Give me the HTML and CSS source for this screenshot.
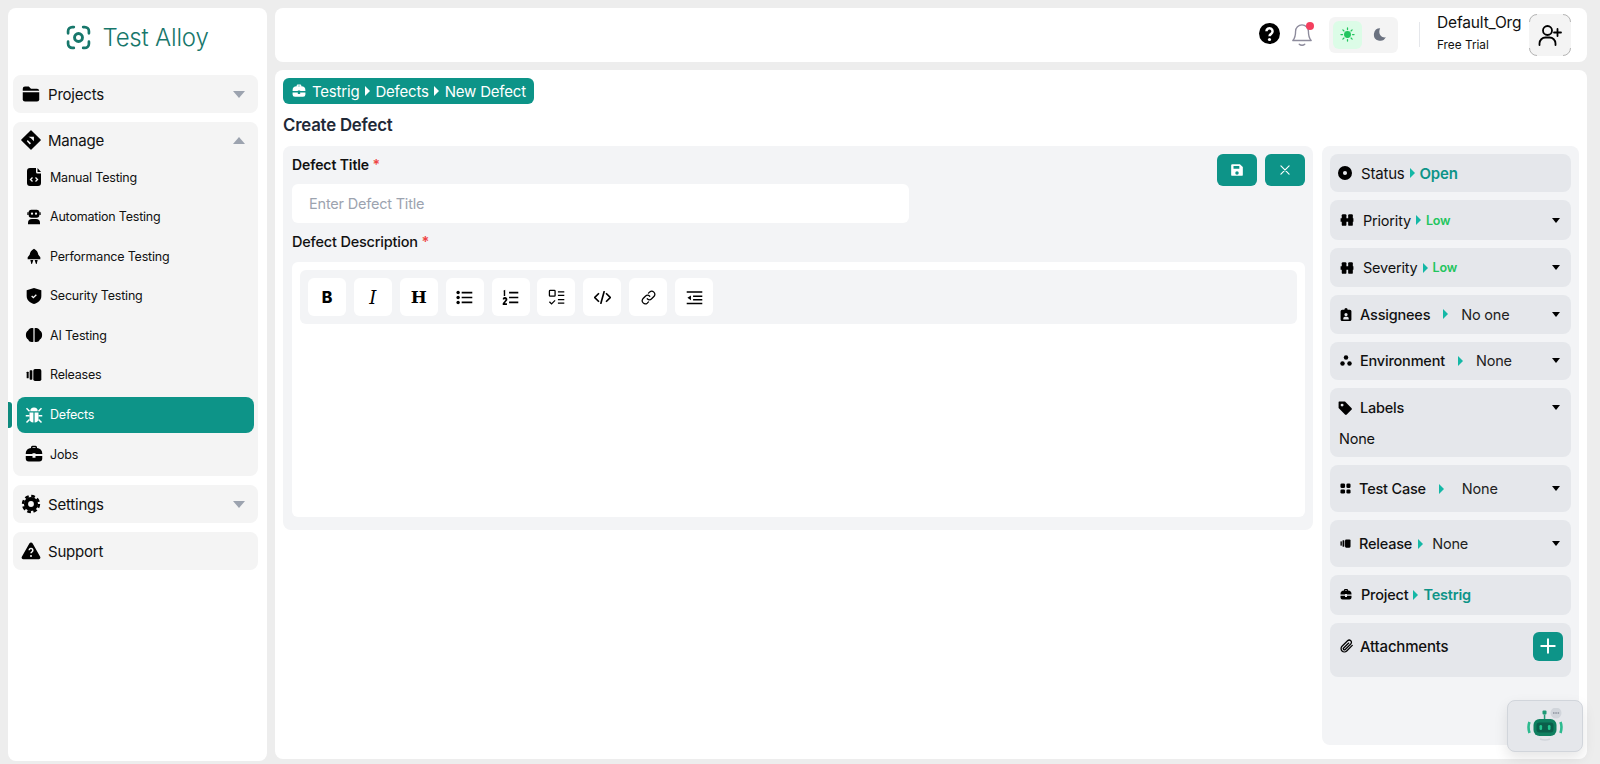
FILE: index.html
```html
<!DOCTYPE html>
<html lang="en">
<head>
  <meta charset="UTF-8">
  <meta name="viewport" content="width=device-width, initial-scale=1.0">
  <title>Create Defect</title>
  <link rel="stylesheet" href="styles.css">
</head>
<body>

  <!-- shared icons -->
  <svg class="sprites" width="0" height="0">
    <symbol id="i-case" viewBox="0 0 24 24"><path fill-rule="evenodd" d="M1 11a7 7 0 0 1 7-7V3a2 2 0 0 1 2-2h4a2 2 0 0 1 2 2v1a7 7 0 0 1 7 7v1H14v-1h-4v1H1zm9-8v1h4V3z"/><path d="M1 14.500h9V17h4v-2.500h9V18a4 4 0 0 1-4 4H5a4 4 0 0 1-4-4z"/></symbol>
    <symbol id="i-release" viewBox="0 0 24 24"><rect x="1" y="7" width="3" height="10" rx="1"/><rect x="5.500" y="5" width="4" height="14" rx="1"/><rect x="11" y="3" width="12" height="18" rx="2.500"/></symbol>
    <symbol id="i-bars" viewBox="0 0 24 24"><rect x="1" y="9" width="22" height="6"/><rect x="3" y="2" width="8" height="20" rx="2"/><rect x="14" y="2" width="8" height="20" rx="2"/></symbol>
  </svg>

  <aside class="sidebar">
    <div class="brand">
      <svg class="brand-icon" viewBox="0 0 24 24" fill="none" stroke="#17776b" stroke-width="2.600" stroke-linecap="round">
        <path d="M2 8V6a4 4 0 0 1 4-4h1.500M16.500 2H18a4 4 0 0 1 4 4v2M22 16v2a4 4 0 0 1-4 4h-1.500M7.500 22H6a4 4 0 0 1-4-4v-2"/>
        <circle cx="12" cy="12" r="3.800" stroke-width="2.800"/>
      </svg>
      <span>Test Alloy</span>
    </div>

    <div class="nav-group">
      <div class="nav-head">
        <svg class="nav-icon" viewBox="0 0 24 24"><path d="M1 5a3 3 0 0 1 3-3h5l3 3h8a3 3 0 0 1 3 2.500H1z"/><path d="M1 9.500h22V19a3 3 0 0 1-3 3H4a3 3 0 0 1-3-3z"/></svg>
        <span>Projects</span>
        <i class="chev"></i>
      </div>
    </div>

    <div class="nav-group">
      <div class="nav-head nav-head-open">
        <svg class="nav-icon icon-lg" viewBox="0 0 24 24"><path d="M12 1l11 11-11 11L1 12z" stroke="#000" stroke-width="1.500" stroke-linejoin="round"/><path d="M9 8h6.500v5.500L12 10z" fill="#f4f4f4"/><path d="M8 12l4 4-1.500 1.500L7 13.500z" fill="#f4f4f4"/></svg>
        <span>Manage</span>
        <i class="chev up"></i>
      </div>
      <ul class="sub-nav">
        <li>
          <svg class="icon-tall" viewBox="0 0 14 18"><path d="M3 0h6v4a1.500 1.500 0 0 0 1.500 1.500H14V15a3 3 0 0 1-3 3H3a3 3 0 0 1-3-3V3a3 3 0 0 1 3-3z"/><path d="M10.500 0L14 4h-3.500z"/><path d="M5.500 9.500L3.500 11.500l2 2M8.500 9.500l2 2-2 2" fill="none" stroke="#f4f4f4" stroke-width="1.300"/></svg>
          Manual Testing
        </li>
        <li>
          <svg viewBox="0 0 24 24"><rect x="4" y="1" width="16" height="12" rx="4"/><path d="M2 5h2v4H2zM20 5h2v4h-2z"/><circle cx="9" cy="7" r="1.700" fill="#f4f4f4"/><circle cx="15" cy="7" r="1.700" fill="#f4f4f4"/><path d="M3 23v-2a6 6 0 0 1 6-6h6a6 6 0 0 1 6 6v2z"/></svg>
          Automation Testing
        </li>
        <li>
          <svg viewBox="0 0 24 24"><path d="M12 1c4 2 6 5 6.500 9l3 4v3h-19v-3l3-4C6 6 8 3 12 1z"/><path d="M6.500 18h4.500l-2 6h-1zM13 18h4.500l-1.500 6h-1z"/></svg>
          Performance Testing
        </li>
        <li>
          <svg viewBox="0 0 24 24"><path d="M12 0l11 3.500V12c0 6-4.500 10-11 12C5.500 22 1 18 1 12V3.500z"/><path d="M8.500 12l2.500 2.500 4.500-4.500" fill="none" stroke="#f4f4f4" stroke-width="2"/></svg>
          Security Testing
        </li>
        <li>
          <svg class="icon-wide" viewBox="0 0 24 24"><path d="M11.200 3v18c-3 1-6 0-7-3-4-2-4-10 0-12 1-3 4-4 7-3zM12.800 3c3-1 6 0 7 3 4 2 4 10 0 12-1 3-4 4-7 3z"/></svg>
          AI Testing
        </li>
        <li>
          <svg viewBox="0 0 24 24"><use href="#i-release"/></svg>
          Releases
        </li>
        <li class="active">
          <svg class="icon-wide" viewBox="0 0 24 24"><path d="M7 7a5 5 0 0 1 10 0z"/><path d="M6 8.500h5.200V22C8 22 6 20 6 17zM18 8.500h-5.200V22c3.200 0 5.200-2 5.200-5z"/><path d="M2 3l4 4M22 3l-4 4M1 13h5M23 13h-5M2 22l4-4M22 22l-4-4" stroke="#fff" stroke-width="2" fill="none"/></svg>
          Defects
        </li>
        <li>
          <svg class="icon-wide" viewBox="0 0 24 24"><use href="#i-case"/></svg>
          Jobs
        </li>
      </ul>
    </div>

    <div class="nav-group">
      <div class="nav-head">
        <svg class="nav-icon icon-lg" viewBox="0 0 24 24"><circle cx="12" cy="12" r="8.500"/><circle cx="12" cy="12" r="9.500" fill="none" stroke="#000" stroke-width="3" stroke-dasharray="4.460 3"/><circle cx="12" cy="12" r="3.500" fill="#f4f4f4"/></svg>
        <span>Settings</span>
        <i class="chev"></i>
      </div>
    </div>

    <div class="nav-group">
      <div class="nav-head">
        <svg class="nav-icon icon-lg" viewBox="0 0 24 24"><path d="M10 3a2.300 2.300 0 0 1 4 0l9 16a2 2 0 0 1-2 3H3a2 2 0 0 1-2-3z"/><path d="M9.800 11a2.200 2.200 0 1 1 3.300 2c-.8.500-1.100 1-1.100 1.800" fill="none" stroke="#f4f4f4" stroke-width="1.800"/><circle cx="12" cy="18" r="1.200" fill="#f4f4f4"/></svg>
        <span>Support</span>
      </div>
    </div>
  </aside>

  <div class="content">
    <header class="topbar">
      <svg class="help" viewBox="0 0 24 24"><circle cx="12" cy="12" r="12"/><path d="M8.500 9.500a3.500 3.500 0 1 1 5.400 2.900c-1.300.8-1.900 1.400-1.900 2.600" fill="none" stroke="#fff" stroke-width="2.800"/><circle cx="12" cy="18.800" r="1.800" fill="#fff"/></svg>
      <span class="bell">
        <svg viewBox="0 0 24 26" fill="none" stroke="#8d8b9c" stroke-width="1.500" stroke-linecap="round" stroke-linejoin="round"><path d="M12 2a7 7 0 0 0-7 7c0 6-1 8-3 10h20c-2-2-3-4-3-10a7 7 0 0 0-7-7z"/><path d="M9 23c1.500 1.500 4.500 1.500 6 0"/></svg>
        <i class="dot"></i>
      </span>
      <div class="theme-toggle">
        <span class="theme-btn on">
          <svg viewBox="0 0 24 24" fill="#22c55e" stroke="#22c55e" stroke-width="2" stroke-linecap="round"><circle cx="12" cy="12" r="4.500"/><path d="M12 1.500v2.500M12 20v2.500M1.500 12H4M20 12h2.500M4.600 4.600l1.700 1.700M17.700 17.700l1.700 1.700M4.600 19.400l1.700-1.700M17.700 6.300l1.700-1.700"/></svg>
        </span>
        <span class="theme-btn">
          <svg viewBox="0 0 24 24" fill="#6b7280"><path d="M13 2a10 10 0 1 0 9 14.500C15 18 9 11 13 2z"/></svg>
        </span>
      </div>
      <div class="org">
        <div class="org-name">Default_Org</div>
        <div class="org-plan">Free Trial</div>
      </div>
      <div class="avatar">
        <svg class="avatar-corners" viewBox="0 0 42 42" fill="none" stroke="#b5b5b5"><path d="M.5 8A7.500 7.500 0 0 1 8 .5M34 .5A7.500 7.500 0 0 1 41.500 8M41.500 34A7.500 7.500 0 0 1 34 41.500M8 41.500A7.500 7.500 0 0 1 .5 34"/></svg>
        <svg viewBox="0 0 24 24" fill="none" stroke="#000" stroke-width="1.800" stroke-linecap="round"><circle cx="9.500" cy="7.500" r="4.500"/><path d="M1.500 22v-1.500a6 6 0 0 1 6-6h4a6 6 0 0 1 6 6V22M19.500 6v7M16 9.500h7"/></svg>
      </div>
    </header>

    <main class="page">
      <div class="crumbs">
        <svg viewBox="0 0 24 24"><use href="#i-case"/></svg>
        <span>Testrig</span><i class="tri"></i><span>Defects</span><i class="tri"></i><span>New Defect</span>
      </div>
      <h1 class="page-title">Create Defect</h1>

      <div class="columns">
        <section class="editor-panel">
          <div class="actions">
            <button class="act-btn" type="button">
              <svg viewBox="0 0 24 24" fill="#fff"><path fill-rule="evenodd" d="M4 2h13l5 5v13a2 2 0 0 1-2 2H4a2 2 0 0 1-2-2V4a2 2 0 0 1 2-2zm2 3v5h10V5zm6 9a3 3 0 1 0 0 6 3 3 0 0 0 0-6z"/></svg>
            </button>
            <button class="act-btn" type="button">
              <svg viewBox="0 0 24 24" fill="none" stroke="#fff" stroke-width="2" stroke-linecap="round"><path d="M5 5l14 14M19 5L5 19"/></svg>
            </button>
          </div>

          <label class="field-label title-label" for="defectTitle">Defect Title <b>*</b></label>
          <input class="title-input" id="defectTitle" type="text" placeholder="Enter Defect Title">
          <label class="field-label desc-label">Defect Description <b>*</b></label>

          <div class="editor">
            <div class="toolbar">
              <button class="tool tool-b" type="button">B</button>
              <button class="tool tool-i" type="button">I</button>
              <button class="tool tool-h" type="button">H</button>
              <button class="tool" type="button">
                <svg viewBox="0 0 24 24"><circle cx="3" cy="5" r="2.400"/><circle cx="3" cy="12" r="2.400"/><circle cx="3" cy="19" r="2.400"/><path d="M8 3.800h15v2.400H8zM8 10.800h15v2.400H8zM8 17.800h15v2.400H8z"/></svg>
              </button>
              <button class="tool" type="button">
                <svg viewBox="0 0 24 24"><path d="M2 2.500L4.500 1v9H2.500V4zM1 14.500a3.300 3.300 0 1 1 5.500 2.500L4 20h3v2.500H1V20l3.500-4a1 1 0 1 0-1.500-1z"/><path d="M10 3.800h13v2.400H10zM10 10.800h13v2.400H10zM10 17.800h13v2.400H10z"/></svg>
              </button>
              <button class="tool" type="button">
                <svg viewBox="0 0 24 24" fill="none" stroke="#000" stroke-width="1.800"><rect x="2" y="2" width="8" height="8" rx="1"/><path d="M2 18l3 3 5-5M14 4h9M14 9h9M14 15h9M14 20h9"/></svg>
              </button>
              <button class="tool" type="button">
                <svg viewBox="0 0 24 24" fill="none" stroke="#000" stroke-width="2.400"><path d="M7 6l-6 6 6 6M17 6l6 6-6 6M14.500 3l-5 18"/></svg>
              </button>
              <button class="tool" type="button">
                <svg class="link-icon" viewBox="0 0 24 24" fill="none" stroke="#000" stroke-width="2" stroke-linecap="round"><path d="M10 14a5 5 0 0 0 7 0l4-4a5 5 0 0 0-7-7l-2 2"/><path d="M14 10a5 5 0 0 0-7 0l-4 4a5 5 0 0 0 7 7l2-2"/></svg>
              </button>
              <button class="tool" type="button">
                <svg viewBox="0 0 24 24"><path d="M1 3h22v2.200H1zM10 9h13v2.200H10zM10 14h13v2.200H10zM1 19.500h22v2.200H1z"/><path d="M7 9l-5 3.500L7 16z"/></svg>
              </button>
            </div>
          </div>
        </section>

        <aside class="meta-panel">
          <div class="meta-row row-status">
            <svg class="meta-icon ico-14" viewBox="0 0 24 24"><path fill-rule="evenodd" d="M12 0a12 12 0 1 1 0 24 12 12 0 0 1 0-24zm0 8.500a3.500 3.500 0 1 0 0 7 3.500 3.500 0 0 0 0-7z"/></svg>
            <span class="plain">Status</span><i class="arrow"></i><span class="val-teal">Open</span>
          </div>
          <div class="meta-row row-priority">
            <svg class="meta-icon ico-14" viewBox="0 0 24 24"><use href="#i-bars"/></svg>
            <span class="plain">Priority</span><i class="arrow"></i><span class="val-low">Low</span>
            <i class="caret"></i>
          </div>
          <div class="meta-row row-severity">
            <svg class="meta-icon ico-14" viewBox="0 0 24 24"><use href="#i-bars"/></svg>
            <span class="plain">Severity</span><i class="arrow"></i><span class="val-low">Low</span>
            <i class="caret"></i>
          </div>
          <div class="meta-row row-assignees">
            <svg class="meta-icon ico-12" viewBox="0 0 20 24"><path fill-rule="evenodd" d="M3 3h4a3 3 0 0 1 6 0h4a3 3 0 0 1 3 3v15a3 3 0 0 1-3 3H3a3 3 0 0 1-3-3V6a3 3 0 0 1 3-3zm7 6a3 3 0 1 0 0 6 3 3 0 0 0 0-6zm-5 12h10v-2a3 3 0 0 0-3-3H8a3 3 0 0 0-3 3z"/></svg>
            <span class="strong">Assignees</span><i class="arrow"></i><span class="val-plain">No one</span>
            <i class="caret"></i>
          </div>
          <div class="meta-row row-env">
            <svg class="meta-icon ico-12" viewBox="0 0 24 24"><circle cx="12" cy="6" r="4.500"/><circle cx="5" cy="18" r="4.500"/><circle cx="19" cy="18" r="4.500"/></svg>
            <span class="strong">Environment</span><i class="arrow"></i><span class="val-plain">None</span>
            <i class="caret"></i>
          </div>
          <div class="meta-row row-labels">
            <div class="labels-top">
              <svg class="meta-icon ico-14" viewBox="0 0 24 24"><path fill-rule="evenodd" d="M2 1h10l11 11a2 2 0 0 1 0 3l-8 8a2 2 0 0 1-3 0L1 12V2a1 1 0 0 1 1-1zm5 3.500a2.500 2.500 0 1 0 0 5 2.500 2.500 0 0 0 0-5z"/></svg>
              <span class="strong">Labels</span>
              <i class="caret"></i>
            </div>
            <div class="labels-val">None</div>
          </div>
          <div class="meta-row row-case">
            <svg class="meta-icon ico-10" viewBox="0 0 24 24"><rect x="1" y="1" width="10" height="10" rx="3"/><rect x="14" y="1" width="9" height="10" rx="3"/><rect x="1" y="14" width="10" height="9" rx="3"/><rect x="14" y="14" width="9" height="9" rx="3"/></svg>
            <span class="strong">Test Case</span><i class="arrow"></i><span class="val-plain">None</span>
            <i class="caret"></i>
          </div>
          <div class="meta-row row-release">
            <svg class="meta-icon ico-10" viewBox="0 0 24 24"><use href="#i-release"/></svg>
            <span class="strong">Release</span><i class="arrow"></i><span class="val-plain">None</span>
            <i class="caret"></i>
          </div>
          <div class="meta-row row-project">
            <svg class="meta-icon ico-12" viewBox="0 0 24 24"><use href="#i-case"/></svg>
            <span class="strong">Project</span><i class="arrow"></i><span class="val-teal">Testrig</span>
          </div>
          <div class="meta-row row-attach">
            <svg class="meta-icon ico-14" viewBox="0 0 24 24" fill="none" stroke="#000" stroke-width="2.200" stroke-linecap="round"><path d="M21 11l-9.500 9.500a5.500 5.500 0 0 1-8-8L13 3a3.700 3.700 0 0 1 5.500 5.500L9 18a1.800 1.800 0 0 1-2.700-2.700L15 7"/></svg>
            <span class="strong">Attachments</span>
            <button class="add-btn" type="button">
              <svg viewBox="0 0 24 24" fill="none" stroke="#fff" stroke-width="2.600" stroke-linecap="round"><path d="M12 3v18M3 12h18"/></svg>
            </button>
          </div>
        </aside>
      </div>
    </main>
  </div>

  <div class="chat-widget">
    <svg viewBox="0 0 44 36">
      <circle cx="33" cy="5" r="5.500" fill="#d1d5db"/>
      <path d="M30 5h1.500M32.300 5h1.500M34.600 5h1.500" stroke="#6b7280" stroke-width="1.200"/>
      <rect x="19.500" y="2.500" width="4" height="4" rx="1" fill="#1d9a75"/>
      <rect x="20.800" y="6.500" width="1.500" height="4.500" fill="#1d9a75"/>
      <rect x="10.500" y="11" width="23" height="17" rx="6" fill="#0f8060"/>
      <rect x="13.500" y="14.500" width="17" height="10" rx="3" fill="#0b5f4b"/>
      <rect x="16.500" y="17" width="2.600" height="5" rx="1.300" fill="#22c58f"/>
      <rect x="24.900" y="17" width="2.600" height="5" rx="1.300" fill="#22c58f"/>
      <path d="M6.500 14q-2 5 0 11M37.500 14q2 5 0 11" fill="none" stroke="#2dbb8f" stroke-width="2.600"/>
      <path d="M17 31q5 2 10 0" fill="none" stroke="#d1d5db" stroke-width="1.500"/>
    </svg>
  </div>

</body>
</html>
```

FILE: styles.css
```css
* {
  box-sizing: border-box;
}
body {
  margin: 0;
  height: 764px;
  padding: 8px 13px 5px 8px;
  display: flex;
  gap: 8px;
  overflow: hidden;
  position: relative;
  background-color: #ededed;
  color: #111;
  font-family: Inter, "Noto Sans", sans-serif;
}
.sprites {
  position: absolute;
}
ul {
  list-style: none;
  margin: 0;
  padding: 0;
}
button {
  border: none;
  padding: 0;
  font-family: inherit;
  cursor: pointer;
}

/* sidebar */
.sidebar {
  width: 259px;
  flex-shrink: 0;
  margin-bottom: -2px;
  background-color: #fff;
  border-radius: 8px;
  padding: 0 9px 0 5px;
}
.brand {
  height: 59px;
  margin-bottom: 8px;
  display: flex;
  align-items: center;
  justify-content: center;
  gap: 11px;
  padding-left: 4px;
  color: #17776b;
  font-size: 24px;
  font-weight: 300;
  letter-spacing: -0.2px;
}
.brand-icon {
  width: 25px;
  height: 25px;
}
.nav-group {
  background-color: #f4f4f4;
  border-radius: 8px;
  margin-bottom: 9px;
}
.nav-head {
  height: 38px;
  display: flex;
  align-items: center;
  padding: 0 13px 0 9px;
  font-size: 15px;
  letter-spacing: -0.2px;
}
.nav-head-open {
  height: 36px;
}
.nav-head span {
  margin-left: 8px;
}
.nav-icon {
  width: 18px;
  height: 18px;
  flex-shrink: 0;
}
.icon-lg {
  width: 20px;
  height: 20px;
  margin-left: -1px;
  margin-right: -1px;
}
.chev {
  margin-left: auto;
  width: 0;
  height: 0;
  border-left: 6.500px solid transparent;
  border-right: 6.500px solid transparent;
  border-top: 7px solid #9ca3af;
}
.chev.up {
  border-top: none;
  border-bottom: 7px solid #9ca3af;
}
.sub-nav {
  padding: 0 4px 4px;
  margin-top: 1px;
  display: flex;
  flex-direction: column;
  gap: 3.600px;
}
.sub-nav li {
  height: 36px;
  display: flex;
  align-items: center;
  gap: 8px;
  padding-left: 9px;
  border-radius: 8px;
  font-size: 12.500px;
  letter-spacing: -0.2px;
}
.sub-nav li svg {
  width: 16px;
  height: 16px;
  flex-shrink: 0;
}
.sub-nav li svg.icon-wide {
  width: 18px;
  height: 18px;
  margin-left: -1px;
  margin-right: -1px;
}
.sub-nav li svg.icon-tall {
  height: 18px;
}
.sub-nav li.active {
  position: relative;
  background-color: #0d9488;
  color: #fff;
  fill: #fff;
}
.sub-nav li.active::before {
  content: "";
  position: absolute;
  left: -9px;
  top: 5px;
  width: 4px;
  height: 26px;
  border-radius: 0 3px 3px 0;
  background-color: #0d8a7e;
}

/* top bar */
.content {
  flex: 1;
  min-width: 0;
  display: flex;
  flex-direction: column;
  gap: 8.500px;
}
.topbar {
  height: 53.500px;
  flex-shrink: 0;
  background-color: #fff;
  border-radius: 8px;
  display: flex;
  align-items: center;
  justify-content: flex-end;
  padding-right: 16px;
}
.help {
  width: 21px;
  height: 21px;
  margin-top: -3px;
}
.bell {
  position: relative;
  width: 22px;
  height: 24px;
  margin-left: 11px;
}
.bell svg {
  width: 22px;
  height: 24px;
}
.bell .dot {
  position: absolute;
  top: -1px;
  right: -1px;
  width: 8px;
  height: 8px;
  border-radius: 50%;
  background-color: #f43f5e;
}
.theme-toggle {
  width: 69px;
  height: 36px;
  margin-left: 16px;
  padding: 4px;
  display: flex;
  gap: 3px;
  background-color: #f4f4f4;
  border-radius: 6px;
}
.theme-btn {
  width: 29px;
  height: 28px;
  display: flex;
  align-items: center;
  justify-content: center;
  border-radius: 6px;
}
.theme-btn svg {
  width: 15px;
  height: 15px;
}
.theme-btn.on {
  background-color: #dcfce7;
}
.org {
  height: 25px;
  margin-left: 21px;
  padding-left: 17px;
  border-left: 1px solid #e5e7eb;
  display: flex;
  flex-direction: column;
  justify-content: center;
  width: 110px;
}
.org-name {
  font-size: 15.500px;
  letter-spacing: -0.15px;
  white-space: nowrap;
  margin-top: -12px;
  margin-bottom: 6px;
}
.org-plan {
  font-size: 11.800px;
  margin-bottom: -7px;
}
.avatar {
  position: relative;
  width: 42px;
  height: 42px;
  display: flex;
  align-items: center;
  justify-content: center;
  background-color: #f4f4f4;
  border-radius: 8px;
}
.avatar svg {
  width: 24px;
  height: 24px;
}
.avatar svg.avatar-corners {
  position: absolute;
  inset: 0;
  width: 42px;
  height: 42px;
}

/* main */
.page {
  flex: 1;
  min-height: 0;
  background-color: #fff;
  border-radius: 8px;
  padding: 8px 8px 0;
}
.crumbs {
  display: inline-flex;
  align-items: center;
  height: 26px;
  padding: 0 8px 0 9px;
  background-color: #0d9488;
  color: #fff;
  border-radius: 6px;
  font-size: 15px;
  letter-spacing: -0.2px;
  fill: #fff;
  vertical-align: top;
}
.crumbs svg {
  width: 14px;
  height: 14px;
  margin-right: 6px;
}
.tri {
  width: 0;
  height: 0;
  margin: 0 5.500px;
  border-top: 5px solid transparent;
  border-bottom: 5px solid transparent;
  border-left: 5px solid #fff;
}
.page-title {
  margin: 10px 0 9px;
  font-size: 16.800px;
  line-height: 23px;
  font-weight: 600;
  color: #1f2937;
  letter-spacing: -0.2px;
}
.columns {
  display: flex;
  gap: 9px;
  align-items: flex-start;
}

/* editor side */
.editor-panel {
  position: relative;
  width: 1030px;
  height: 384px;
  background-color: #f3f4f6;
  border-radius: 8px;
  padding: 9px 8px 11px 9px;
}
.actions {
  position: absolute;
  top: 8px;
  right: 8px;
  display: flex;
  gap: 8px;
}
.act-btn {
  width: 40px;
  height: 32px;
  display: flex;
  align-items: center;
  justify-content: center;
  background-color: #0d9488;
  border-radius: 6px;
}
.act-btn svg {
  width: 14px;
  height: 14px;
}
.field-label {
  display: block;
  font-size: 14px;
  line-height: 20px;
  letter-spacing: -0.2px;
}
.field-label b {
  color: #ef4444;
  font-weight: 600;
}
.title-label {
  font-weight: 600;
  letter-spacing: -0.1px;
}
.desc-label {
  font-size: 14.500px;
  font-weight: 500;
  margin-top: 9px;
}
.title-input {
  display: block;
  width: 617px;
  height: 39px;
  margin-top: 9px;
  padding: 0 17px;
  border: none;
  border-radius: 6px;
  background-color: #fff;
  font-family: inherit;
  font-size: 14.500px;
  letter-spacing: -0.2px;
}
.title-input::placeholder {
  color: #9ca3af;
}
.editor {
  height: 255px;
  margin-top: 10px;
  padding: 8px;
  background-color: #fff;
  border-radius: 6px;
}
.toolbar {
  height: 54px;
  padding: 8px;
  display: flex;
  gap: 7.900px;
  background-color: #f3f4f6;
  border-radius: 6px;
}
.tool {
  width: 38px;
  height: 38px;
  display: flex;
  align-items: center;
  justify-content: center;
  background-color: #fff;
  border-radius: 6px;
  color: #000;
  font-size: 16px;
}
.tool svg {
  width: 17px;
  height: 17px;
}
.tool svg.link-icon {
  width: 15px;
  height: 15px;
}
.tool-b {
  font-weight: 800;
}
.tool-i {
  font-family: "DejaVu Serif", serif;
  font-style: italic;
  font-size: 18px;
}
.tool-h {
  font-family: "DejaVu Serif", serif;
  font-weight: 700;
  font-size: 17px;
}

/* right side */
.meta-panel {
  width: 257px;
  height: 599px;
  background-color: #f3f4f6;
  border-radius: 8px;
  padding: 8px;
  display: flex;
  flex-direction: column;
  gap: 8px;
  font-size: 14.500px;
  letter-spacing: -0.2px;
}
.meta-row {
  flex-shrink: 0;
  display: flex;
  align-items: center;
  padding: 0 10px;
  background-color: #e5e7eb;
  border-radius: 8px;
}
.row-status { height: 38px; padding-left: 8px; }
.row-priority { height: 40px; }
.row-severity { height: 39px; }
.row-assignees, .row-env { height: 38.500px; }
.row-labels { height: 69px; display: block; padding-top: 11px; }
.row-case, .row-release { height: 47px; }
.row-project { height: 39.500px; }
.row-attach { height: 54.500px; align-items: flex-start; padding-top: 9px; padding-right: 8px; }
.meta-icon {
  flex-shrink: 0;
}
.ico-14 { width: 14px; height: 14px; }
.ico-12 { width: 12px; height: 13px; }
.ico-10 { width: 11px; height: 11px; }
.plain {
  margin-left: 9px;
}
.strong {
  margin-left: 8px;
  font-weight: 500;
}
.row-status .plain {
  margin-left: 9px;
  font-size: 15px;
}
.row-status .val-teal {
  font-size: 15px;
}
.row-project .strong { margin-left: 9px; }
.row-attach .strong {
  margin-left: 6px;
  font-size: 15px;
  line-height: 29px;
}
.row-attach .meta-icon { margin-top: 7.500px; }
.arrow {
  flex-shrink: 0;
  width: 0;
  height: 0;
  margin: 0 5px;
  border-top: 5px solid transparent;
  border-bottom: 5px solid transparent;
  border-left: 5px solid #14b8a6;
}
.row-assignees .arrow, .row-env .arrow { margin: 0 13px; }
.row-case .arrow { margin: 0 18px 0 13px; }
.row-release .arrow { margin: 0 9px 0 6px; }
.val-teal {
  color: #0d9488;
  font-weight: 600;
}
.val-low {
  color: #22c55e;
  font-size: 12.500px;
  font-weight: 600;
}
.val-plain {
  color: #222;
}
.caret {
  margin-left: auto;
  flex-shrink: 0;
  width: 0;
  height: 0;
  margin-right: 1px;
  border-left: 4.500px solid transparent;
  border-right: 4.500px solid transparent;
  border-top: 5px solid #000;
}
.labels-top {
  display: flex;
  align-items: center;
  margin-left: -2px;
}
.labels-val {
  margin-left: -1px;
  margin-top: 14px;
}
.add-btn {
  margin-left: auto;
  width: 30px;
  height: 29px;
  display: flex;
  align-items: center;
  justify-content: center;
  background-color: #0d9488;
  border-radius: 6px;
}
.add-btn svg {
  width: 18px;
  height: 18px;
}

/* floating assistant button */
.chat-widget {
  position: absolute;
  left: 1507px;
  top: 700px;
  width: 76px;
  height: 52px;
  display: flex;
  align-items: center;
  justify-content: center;
  background-color: #e5e7eb;
  border: 1px solid #d1d5db;
  border-radius: 8px;
  box-shadow: 0 6px 14px rgba(0, 0, 0, 0.1);
}
.chat-widget svg {
  width: 44px;
  height: 36px;
  filter: blur(0.7px);
}
```
